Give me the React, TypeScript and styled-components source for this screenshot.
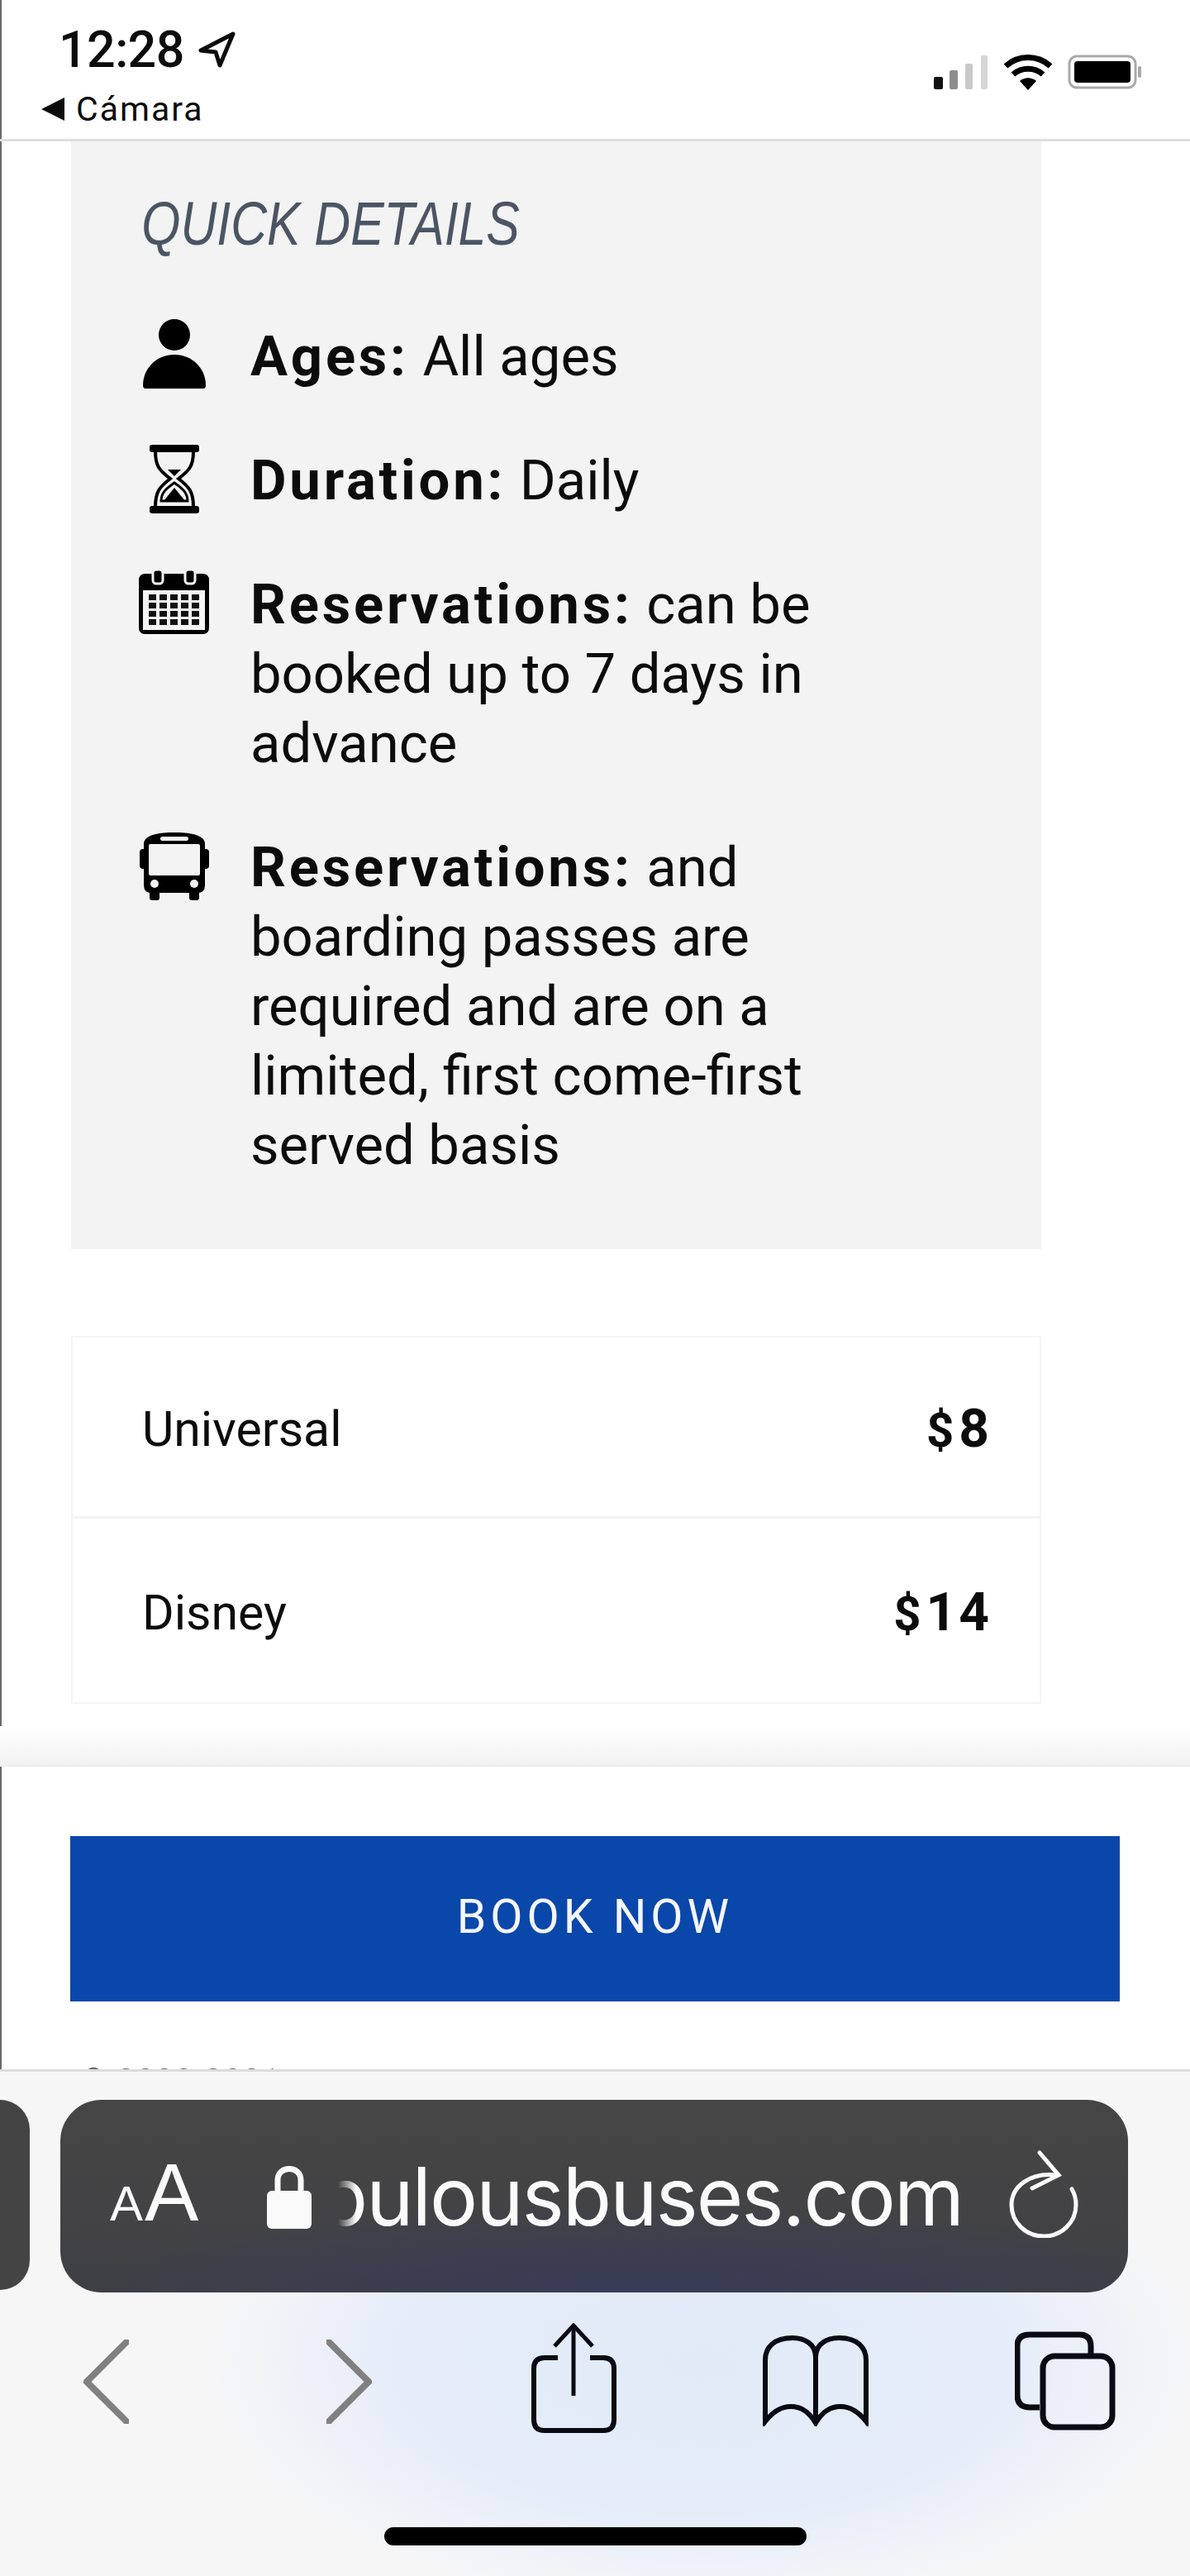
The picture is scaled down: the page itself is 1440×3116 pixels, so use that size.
import React from "react";
import styled, { createGlobalStyle } from "styled-components";

const GlobalStyle = createGlobalStyle`
  html, body {
    margin: 0;
    padding: 0;
    background: #fff;
  }
  body {
    font-family: Roboto, "Liberation Sans", sans-serif;
    color: #0c0c0c;
  }
`;

const Page = styled.div`
  width: 1440px;
  height: 3116px;
  overflow: hidden;
  display: flex;
  flex-direction: column;
  background: #fff;
  box-shadow: inset 2px 0 0 #6a6a6a;
`;

const StatusBar = styled.header`
  height: 171px;
  box-sizing: border-box;
  flex: none;
  display: flex;
  justify-content: space-between;
  padding: 30px 58px 0 50px;
  border-bottom: 3px solid #dedede;
`;

const StatusLeft = styled.div`
  display: flex;
  flex-direction: column;
`;

const TimeRow = styled.div`
  display: flex;
  align-items: center;
  gap: 16px;
  padding-left: 21px;
  font-size: 61px;
  font-weight: 500;
  line-height: 60px;
  letter-spacing: -0.6px;
`;

const BackRow = styled.div`
  display: flex;
  align-items: center;
  gap: 14px;
  margin-top: 19px;
  font-size: 41px;
  line-height: 46px;
  letter-spacing: 2px;
`;

const BackArrow = styled.span`
  width: 0;
  height: 0;
  border-style: solid;
  border-width: 14px 28px 14px 0;
  border-color: transparent #0c0c0c transparent transparent;
`;

const StatusIcons = styled.div`
  display: flex;
  align-items: center;
  gap: 18px;
  height: 42px;
  margin-top: 36px;
`;

const Content = styled.main`
  flex: none;
  padding: 0 0 0 86px;
`;

const DetailsPanel = styled.section`
  width: 1174px;
  box-sizing: border-box;
  padding: 0 0 84px 82px;
  background: #f3f3f4;
`;

const DetailsTitle = styled.h2`
  margin: 0;
  height: 215px;
  box-sizing: border-box;
  padding: 58px 0 0 4px;
  font-family: "Liberation Sans", sans-serif;
  font-size: 74px;
  line-height: 84px;
  font-weight: 400;
  font-style: italic;
  color: #4b5563;
  white-space: nowrap;
  transform: scaleX(0.82);
  transform-origin: left top;
`;

const DetailsList = styled.ul`
  margin: 0;
  padding: 0;
  list-style: none;
  display: flex;
  flex-direction: column;
  gap: 63px;
`;

const DetailRow = styled.li`
  display: grid;
  grid-template-columns: 85px 1fr;
  column-gap: 51px;
  width: 900px;
`;

const DetailIcon = styled.div<{ $top: number }>`
  display: flex;
  justify-content: center;
  padding-top: ${(p) => p.$top}px;
`;

const DetailText = styled.p`
  margin: 0;
  padding-top: 3px;
  margin-left: -1px;
  font-size: 67px;
  line-height: 84px;
  width: 720px;

  b {
    font-weight: 700;
    letter-spacing: 3.8px;
  }
`;

const PriceTable = styled.div`
  width: 1174px;
  margin-top: 105px;
  box-sizing: border-box;
  border: 2px solid #f5f5f6;
`;

const PriceRow = styled.div<{ $last?: boolean }>`
  height: ${(p) => (p.$last ? 222 : 219)}px;
  box-sizing: border-box;
  display: flex;
  align-items: center;
  justify-content: space-between;
  padding: 4px 58px 0 84px;
  border-bottom: ${(p) => (p.$last ? "none" : "3px solid #f3f3f4")};
`;

const PriceLabel = styled.span`
  font-size: 59px;
`;

const PriceValue = styled.span`
  font-size: 64px;
  font-weight: 700;
  letter-spacing: 3px;
`;

const Currency = styled.span`
  font-size: 58px;
  letter-spacing: 6px;
`;

const PageFade = styled.div`
  flex: none;
  height: 47px;
  margin-top: 27px;
  background: linear-gradient(to bottom, #ffffff, #f2f2f2);
  border-bottom: 2px solid #ececec;
`;

const BookingArea = styled.div`
  flex: none;
  height: 366px;
  box-sizing: border-box;
  padding: 84px 85px 0;
  display: flex;
  flex-direction: column;
  justify-content: space-between;
`;

const BookButton = styled.button`
  width: 1270px;
  height: 200px;
  border: none;
  padding: 0 0 5px;
  background: #0a47ab;
  color: #f4f6fb;
  font-family: Roboto, sans-serif;
  font-size: 57px;
  letter-spacing: 5px;
`;

const FooterPeek = styled.div`
  height: 7px;
  overflow: hidden;
  padding-left: 14px;
  font-size: 36px;
  line-height: 40px;
  letter-spacing: 3px;
  color: #6b6b6b;
`;

const BrowserChrome = styled.div`
  flex: 1;
  display: flex;
  flex-direction: column;
  border-top: 3px solid #dcdcdc;
  background:
    radial-gradient(ellipse 600px 300px at 850px 350px, #e1eaf7 0%, #e6edf9 62%, rgba(240, 243, 250, 0) 100%),
    #f6f6f7;
`;

const TabRow = styled.div`
  display: flex;
  gap: 37px;
  margin-top: 34px;
`;

const PrevTab = styled.div`
  width: 36px;
  height: 230px;
  background: #444;
  border-radius: 0 50px 50px 0;
`;

const UrlBar = styled.div`
  width: 1292px;
  height: 233px;
  box-sizing: border-box;
  border-radius: 50px;
  padding: 0 60px;
  display: flex;
  align-items: center;
  color: #fafafa;
  background:
    radial-gradient(ellipse 680px 110px at 700px 233px, #383c58 0%, rgba(56, 60, 88, 0) 100%),
    linear-gradient(to bottom, #454545 0%, #434345 60%, #3e3f44 100%);
`;

const FontSize = styled.span`
  display: flex;
  align-items: baseline;
  width: 190px;
  flex: none;
  margin-top: 4px;
  font-family: "Liberation Sans", sans-serif;
  line-height: 100px;
`;

const SizeLetter = styled.span<{ $big?: boolean }>`
  font-size: ${(p) => (p.$big ? 98 : 60)}px;
  margin-left: ${(p) => (p.$big ? 2 : 0)}px;
`;

const UrlText = styled.div`
  width: 757px;
  margin-left: 32px;
  overflow: hidden;
  direction: rtl;
  white-space: nowrap;
  font-family: Inter, sans-serif;
  font-size: 97px;
  line-height: 120px;
  letter-spacing: -2px;
  -webkit-mask-image: linear-gradient(to right, transparent 0, #000 22px);
  mask-image: linear-gradient(to right, transparent 0, #000 22px);
`;

const ReloadSlot = styled.div`
  margin-left: 56px;
  margin-top: -6px;
  display: flex;
`;

const Toolbar = styled.nav`
  display: flex;
  align-items: flex-start;
  height: 133px;
  margin-top: 37px;
`;

const NavItem = styled.div<{ $left: number; $top: number }>`
  margin-left: ${(p) => p.$left}px;
  margin-top: ${(p) => p.$top}px;
  display: flex;
`;

const HomeIndicator = styled.div`
  width: 511px;
  height: 22px;
  margin: 114px auto 0;
  border-radius: 11px;
  background: #000;
`;

const LocationArrow = () => (
  <svg width="46" height="44" viewBox="0 0 46 44" fill="none">
    <path d="M43 3 L4 23 L22 25 L27 41 Z" stroke="#0c0c0c" strokeWidth="5" strokeLinejoin="round" />
  </svg>
);

const SignalIcon = () => (
  <svg width="66" height="41" viewBox="0 0 66 41">
    <rect x="0" y="26" width="11" height="15" rx="2" fill="#111" />
    <rect x="19" y="18" width="10" height="23" rx="2" fill="#8d8d8d" />
    <rect x="38" y="10" width="9" height="31" rx="2" fill="#c9c9c9" />
    <rect x="57" y="0" width="8" height="41" rx="2" fill="#d6d6d6" />
  </svg>
);

const WifiIcon = () => (
  <svg width="60" height="43" viewBox="0 0 60 43" fill="none" stroke="#000" strokeWidth="7">
    <path d="M3 14 C18 0 42 0 57 14" />
    <path d="M12 24 C22 15 38 15 48 24" />
    <path d="M30 43 L20 32 C26 27 34 27 40 32 Z" fill="#000" stroke="none" />
  </svg>
);

const BatteryIcon = () => (
  <svg width="90" height="42" viewBox="0 0 90 42">
    <rect x="2" y="2" width="80" height="38" rx="9" fill="none" stroke="#a9a9a9" strokeWidth="3" />
    <rect x="8" y="8" width="68" height="26" rx="4" fill="#000" />
    <rect x="85" y="14" width="4" height="14" rx="2" fill="#a9a9a9" />
  </svg>
);

const PersonIcon = () => (
  <svg width="76" height="84" viewBox="0 0 76 84">
    <circle cx="38" cy="19" r="19" fill="#000" />
    <path d="M3 84 Q0 84 0 80 C0 60 16 43 38 43 C60 43 76 60 76 80 Q76 84 73 84 Z" fill="#000" />
  </svg>
);

const HourglassIcon = () => (
  <svg width="60" height="83" viewBox="0 0 60 83" fill="none">
    <rect x="0" y="0" width="60" height="9" rx="3" fill="#000" />
    <rect x="0" y="74" width="60" height="9" rx="3" fill="#000" />
    <path d="M7 8 C7 26 12 31 25 41 C12 51 7 57 7 75 M53 8 C53 26 48 31 35 41 C48 51 53 57 53 75" stroke="#000" strokeWidth="4" />
    <path d="M14 68 C14 58 20 53 30 46 C40 53 46 58 46 68 Z" stroke="#000" strokeWidth="3" />
    <path d="M22 30 H38 L30 38 Z M17 68 L30 52 L43 68 Z" fill="#000" />
  </svg>
);

const CalendarIcon = () => (
  <svg width="85" height="78" viewBox="0 0 85 78">
    <path d="M8 5 H77 Q85 5 85 13 V70 Q85 78 77 78 H8 Q0 78 0 70 V13 Q0 5 8 5 Z" fill="#000" />
    <rect x="5" y="25" width="75" height="48" fill="#f3f3f4" />
    <rect x="17" y="0" width="12" height="17" rx="4" fill="#000" stroke="#f3f3f4" strokeWidth="3" />
    <rect x="56" y="0" width="12" height="17" rx="4" fill="#000" stroke="#f3f3f4" strokeWidth="3" />
    {[30, 40, 50, 60].map((y) =>
      [12, 25, 38, 51, 64].map((x) => <rect key={`${x}-${y}`} x={x} y={y} width="9" height="7" fill="#111" />)
    )}
  </svg>
);

const BusIcon = () => (
  <svg width="84" height="82" viewBox="0 0 84 82">
    <rect x="0" y="20" width="8" height="24" rx="4" fill="#000" />
    <rect x="76" y="20" width="8" height="24" rx="4" fill="#000" />
    <rect x="12" y="70" width="12" height="12" rx="3" fill="#000" />
    <rect x="60" y="70" width="12" height="12" rx="3" fill="#000" />
    <path d="M5 14 C5 3 22 0 42 0 C62 0 79 3 79 14 V64 Q79 73 70 73 H14 Q5 73 5 64 Z" fill="#000" />
    <rect x="11" y="14" width="62" height="38" rx="2" fill="#f3f3f4" />
    <rect x="25" y="5" width="34" height="5" rx="2.5" fill="#f3f3f4" />
    <circle cx="18" cy="62" r="5" fill="#f3f3f4" />
    <circle cx="66" cy="62" r="5" fill="#f3f3f4" />
  </svg>
);

const LockIcon = () => (
  <svg width="54" height="78" viewBox="0 0 54 78" style={{ flex: "none" }}>
    <path d="M13 36 V19 C13 1 41 1 41 19 V36" fill="none" stroke="#fafafa" strokeWidth="7" />
    <rect x="0" y="32" width="54" height="46" rx="6" fill="#fafafa" />
  </svg>
);

const ReloadIcon = () => (
  <svg width="84" height="106" viewBox="0 0 84 106" fill="none" stroke="#fafafa" strokeWidth="5" strokeLinecap="round">
    <path d="M58 30 C24 26 3 45 3 66 C3 87 20 104 42 104 C64 104 81 87 81 66 C81 58 79 52 76 47" />
    <path d="M37 3 L60 30 L28 46" />
  </svg>
);

const ChevronLeft = () => (
  <svg width="55" height="102" viewBox="0 0 55 102" fill="none" stroke="#808080" strokeWidth="8" strokeLinecap="round">
    <path d="M52 3 L4 51 L52 99" />
  </svg>
);

const ChevronRight = () => (
  <svg width="55" height="102" viewBox="0 0 55 102" fill="none" stroke="#808080" strokeWidth="8" strokeLinecap="round">
    <path d="M3 3 L51 51 L3 99" />
  </svg>
);

const ShareIcon = () => (
  <svg width="103" height="133" viewBox="0 0 103 133" fill="none" stroke="#0a0a14" strokeWidth="5">
    <path d="M32 42 H16 Q3 42 3 55 V117 Q3 130 16 130 H87 Q100 130 100 117 V55 Q100 42 87 42 H71" strokeWidth="6" />
    <path d="M51 4 V88" />
    <path d="M28 28 L51 3 L74 28" />
  </svg>
);

const BookIcon = () => (
  <svg width="128" height="110" viewBox="0 0 128 110" fill="none" stroke="#0a0a14" strokeWidth="6">
    <path d="M64 26 C64 10 50 3 36 3 C14 3 3 14 3 30 V104 C14 90 24 86 34 86 C46 86 56 92 64 106 C72 92 82 86 94 86 C104 86 114 90 125 104 V30 C125 14 114 3 92 3 C78 3 64 10 64 26 V106" />
  </svg>
);

const TabsIcon = () => (
  <svg width="122" height="120" viewBox="0 0 122 120" fill="none" stroke="#0a0a14" strokeWidth="7">
    <path d="M30 92 H18 Q3 92 3 77 V18 Q3 4 18 4 H78 Q92 4 92 18 V30" />
    <rect x="34" y="30" width="84" height="86" rx="14" />
  </svg>
);

const details = [
  { icon: <PersonIcon />, top: 0, label: "Ages:", text: "All ages" },
  { icon: <HourglassIcon />, top: 2, label: "Duration:", text: "Daily" },
  { icon: <CalendarIcon />, top: 3, label: "Reservations:", text: "can be booked up to 7 days in advance" },
  { icon: <BusIcon />, top: 3, label: "Reservations:", text: "and boarding passes are required and are on a limited, first come-first served basis" },
];

const App: React.FC = () => (
  <Page>
    <GlobalStyle />
    <StatusBar>
      <StatusLeft>
        <TimeRow>
          12:28
          <LocationArrow />
        </TimeRow>
        <BackRow>
          <BackArrow />
          Cámara
        </BackRow>
      </StatusLeft>
      <StatusIcons>
        <SignalIcon />
        <WifiIcon />
        <BatteryIcon />
      </StatusIcons>
    </StatusBar>
    <Content>
      <DetailsPanel>
        <DetailsTitle>QUICK DETAILS</DetailsTitle>
        <DetailsList>
          {details.map((d, i) => (
            <DetailRow key={i}>
              <DetailIcon $top={d.top}>{d.icon}</DetailIcon>
              <DetailText>
                <b>{d.label}</b> {d.text}
              </DetailText>
            </DetailRow>
          ))}
        </DetailsList>
      </DetailsPanel>
      <PriceTable>
        <PriceRow>
          <PriceLabel>Universal</PriceLabel>
          <PriceValue><Currency>$</Currency>8</PriceValue>
        </PriceRow>
        <PriceRow $last>
          <PriceLabel>Disney</PriceLabel>
          <PriceValue><Currency>$</Currency>14</PriceValue>
        </PriceRow>
      </PriceTable>
    </Content>
    <PageFade />
    <BookingArea>
      <BookButton>BOOK NOW</BookButton>
      <FooterPeek>© 2020-2021</FooterPeek>
    </BookingArea>
    <BrowserChrome>
      <TabRow>
        <PrevTab />
        <UrlBar>
          <FontSize>
            <SizeLetter>A</SizeLetter>
            <SizeLetter $big>A</SizeLetter>
          </FontSize>
          <LockIcon />
          <UrlText>fabulousbuses.com</UrlText>
          <ReloadSlot>
            <ReloadIcon />
          </ReloadSlot>
        </UrlBar>
      </TabRow>
      <Toolbar>
        <NavItem $left={101} $top={20}><ChevronLeft /></NavItem>
        <NavItem $left={239} $top={20}><ChevronRight /></NavItem>
        <NavItem $left={193} $top={0}><ShareIcon /></NavItem>
        <NavItem $left={177} $top={15}><BookIcon /></NavItem>
        <NavItem $left={177} $top={10}><TabsIcon /></NavItem>
      </Toolbar>
      <HomeIndicator />
    </BrowserChrome>
  </Page>
);

export default App;
